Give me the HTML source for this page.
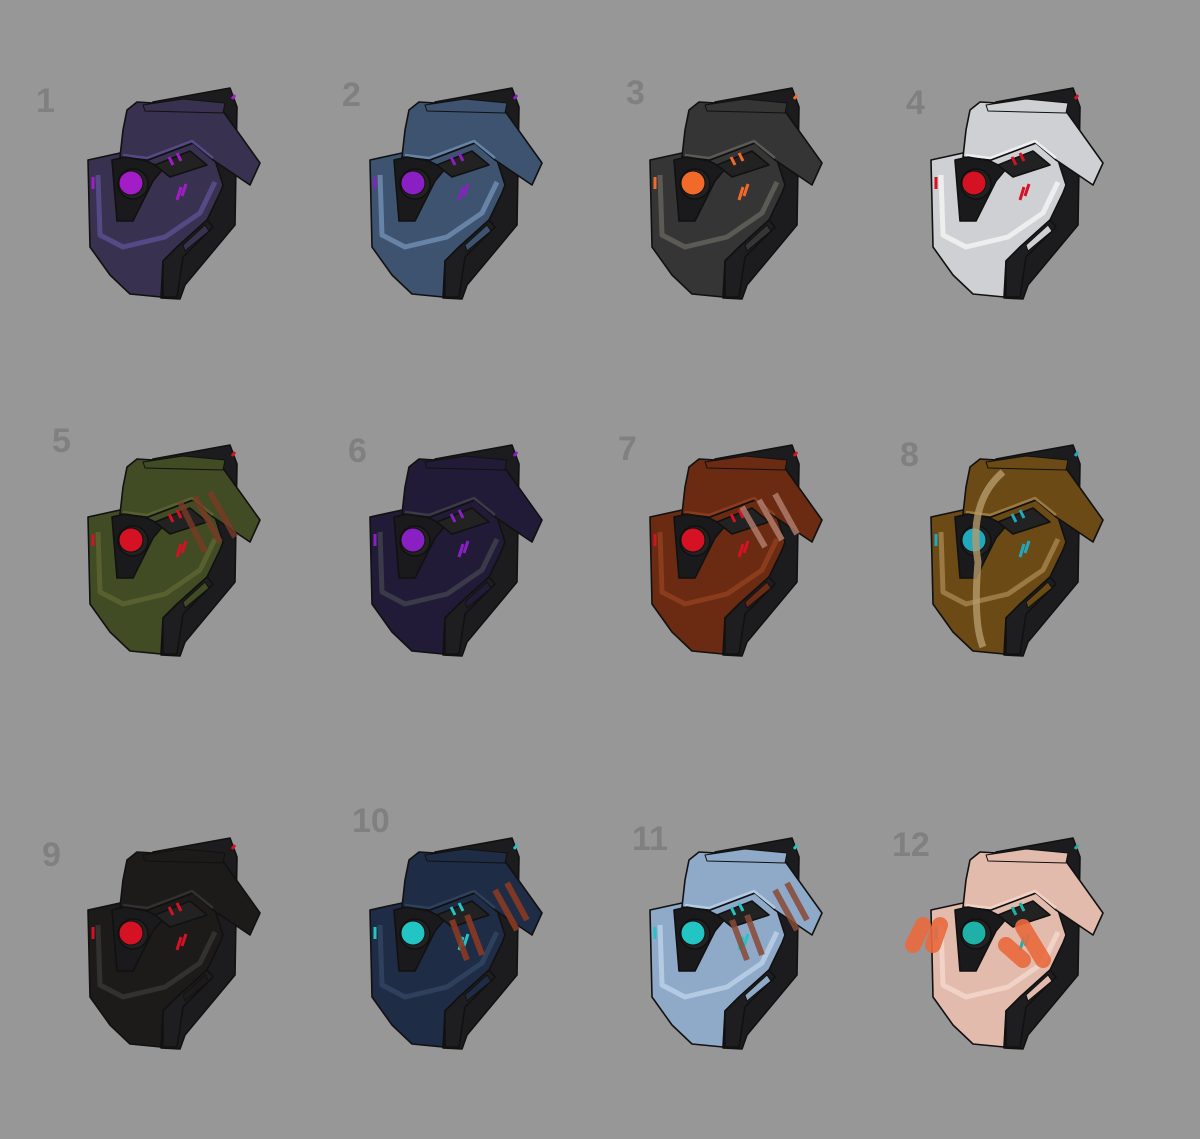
<!DOCTYPE html>
<html><head><meta charset="utf-8"><style>
html,body{margin:0;padding:0;background:#979797;}
svg{display:block}
.n{font-family:"Liberation Sans",sans-serif;font-weight:bold;font-size:34px;fill:#808080}
</style></head><body>
<svg width="1200" height="1139" viewBox="0 0 1200 1139" xmlns="http://www.w3.org/2000/svg">
<rect width="1200" height="1139" fill="#979797"/>
<defs>
<g id="h" stroke="#111" stroke-width="1.6" stroke-linejoin="round">
  <polygon points="68,17 145,3 152,22 150,140 100,200 95,214 76,213 88,60" fill="#1c1c1e"/>
  <polygon points="3,75 35,68 63,75 108,58 130,75 138,100 135,108 122,135 92,162 78,176 76,212 45,209 25,190 5,162" style="fill:var(--m)"/>
  <path d="M13,90 L15,150 L38,162 L80,152 L115,128 L130,97" fill="none" style="stroke:var(--s)" stroke-width="5"/>
  <polygon points="92,162 122,135 128,142 98,172 92,212 78,212 78,176" fill="#1e1e20"/>
  <polygon points="98,160 120,140 124,146 100,166" style="fill:var(--m)" stroke-width="1"/>
  <polygon points="42,25 52,17 135,22 175,78 165,100 128,75 108,58 63,75 35,72 38,45" style="fill:var(--m)"/>
  <polygon points="58,20 98,14 140,18 138,28 60,26" style="fill:var(--m)" stroke-width="1"/>
  <path d="M38,70 L62,73 L107,56 L128,73" fill="none" style="stroke:var(--s)" stroke-width="2.5"/>
  <polygon points="27,75 32,136 48,136 68,96 78,84 62,76 40,72" fill="#1a1a1c"/>
  <polygon points="70,80 105,66 122,80 85,92" fill="#222"/>
  <path d="M84,72 L88,80 M92,68 L96,76" style="stroke:var(--e)" stroke-width="3"/>
  <circle cx="48" cy="99" r="15" fill="#222"/>
  <circle cx="46" cy="98" r="12" style="fill:var(--e)" stroke-width="1"/>
  <path d="M96,102 L92,115 M101,99 L97,111" style="stroke:var(--e)" stroke-width="3"/>
  <path d="M8,92 L8,104" style="stroke:var(--e)" stroke-width="3"/>
  <path d="M147,14 L150,10" style="stroke:var(--e)" stroke-width="3"/>
</g>
</defs>
<g transform="translate(85,85)" style="--m:#393150;--s:#564a86;--e:#a21dc8"><use href="#h"/></g>
<g transform="translate(367,85)" style="--m:#3d536f;--s:#6784a6;--e:#8a20c4"><use href="#h"/></g>
<g transform="translate(647,85)" style="--m:#353535;--s:#5c5a55;--e:#f26a2a"><use href="#h"/></g>
<g transform="translate(928,85)" style="--m:#cfd0d3;--s:#eeeeee;--e:#d41224"><use href="#h"/></g>

<g transform="translate(85,442)" style="--m:#414b24;--s:#586030;--e:#d41224"><use href="#h"/><path d="M95,60 L120,110 M110,55 L135,100 M125,50 L150,95" stroke="#7a3a25" stroke-width="6" opacity=".8"/></g>
<g transform="translate(367,442)" style="--m:#211b38;--s:#3a3a48;--e:#8a20c4"><use href="#h"/></g>
<g transform="translate(647,442)" style="--m:#6a2b12;--s:#8a3c1c;--e:#d41224"><use href="#h"/><path d="M95,65 L118,105 M112,58 L135,98 M128,52 L150,92" stroke="#b48070" stroke-width="6" opacity=".8"/></g>
<g transform="translate(928,442)" style="--m:#6b4a15;--s:#9a7a42;--e:#22a8bc"><use href="#h"/><path d="M75,30 Q40,60 50,120 Q45,180 55,205" stroke="#b59a6c" stroke-width="7" fill="none" opacity=".8"/></g>

<g transform="translate(85,835)" style="--m:#1d1a1a;--s:#333030;--e:#d41224"><use href="#h"/></g>
<g transform="translate(367,835)" style="--m:#1f2c45;--s:#2f405c;--e:#22c4c4"><use href="#h"/><path d="M85,85 L100,125 M100,80 L115,120 M128,55 L150,95 M140,48 L160,85" stroke="#8a3a22" stroke-width="6" opacity=".9"/></g>
<g transform="translate(647,835)" style="--m:#8fa9c9;--s:#b3cae2;--e:#22c4c4"><use href="#h"/><path d="M85,85 L100,125 M100,80 L115,120 M128,55 L150,95 M140,48 L160,85" stroke="#8a4a35" stroke-width="6" opacity=".85"/></g>
<g transform="translate(928,835)" style="--m:#e2bbac;--s:#f0d2c6;--e:#1fb0a8"><use href="#h"/><path d="M-15,110 L-5,90 M5,110 L12,90 M78,110 L95,125 M95,92 L115,125" stroke="#ea6a3e" stroke-width="16" stroke-linecap="round" opacity=".9"/></g>

<text class="n" x="36" y="112">1</text>
<text class="n" x="342" y="106">2</text>
<text class="n" x="626" y="104">3</text>
<text class="n" x="906" y="114">4</text>
<text class="n" x="52" y="452">5</text>
<text class="n" x="348" y="462">6</text>
<text class="n" x="618" y="460">7</text>
<text class="n" x="900" y="466">8</text>
<text class="n" x="42" y="866">9</text>
<text class="n" x="352" y="832">10</text>
<text class="n" x="632" y="850">11</text>
<text class="n" x="892" y="856">12</text>
</svg>
</body></html>
